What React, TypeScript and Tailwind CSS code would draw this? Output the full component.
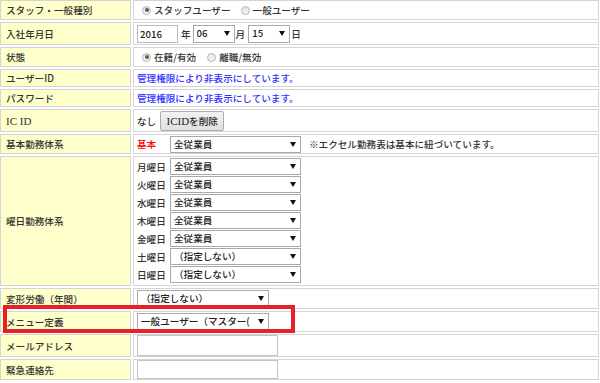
import React from 'react'

const font = { fontFamily: '"Noto Sans CJK JP", "Noto Sans", sans-serif' }

function Radio({ checked }: { checked?: boolean }) {
  return (
    <span className="ml-[5px] mr-[3px] inline-flex h-[9px] w-[9px] shrink-0 items-center justify-center rounded-full border border-[#b5b5b5] bg-gradient-to-b from-[#e4e4e4] to-[#f6f6f6]">
      {checked && <span className="h-[4px] w-[4px] rounded-full bg-[#5a5a5a]" />}
    </span>
  )
}

function Arrow() {
  return (
    <svg width="6" height="5" viewBox="0 0 6 5" className="shrink-0">
      <path d="M0 0h6L3 5z" fill="#111" />
    </svg>
  )
}

function Select({ value, w, className = '' }: { value: string; w: string; className?: string }) {
  return (
    <div
      className={`flex h-[17px] shrink-0 items-center gap-[2px] border border-[#a9a9a9] bg-white pl-[3px] pr-[4px] text-[#222] ${w} ${className}`}
    >
      <span className="min-w-0 flex-1 overflow-hidden whitespace-nowrap leading-[15px]">{value}</span>
      <Arrow />
    </div>
  )
}

function Label({ children }: { children: React.ReactNode }) {
  return (
    <div className="flex items-center border border-[#d4d4d4] bg-[#ffffcc] pl-[5px] text-[#333]">
      {children}
    </div>
  )
}

function Value({ children, className = '' }: { children?: React.ReactNode; className?: string }) {
  return (
    <div className={`flex items-center border border-[#d4d4d4] bg-white pl-[3px] text-[#333] ${className}`}>
      {children}
    </div>
  )
}

const days = [
  { d: '月曜日', v: '全従業員' },
  { d: '火曜日', v: '全従業員' },
  { d: '水曜日', v: '全従業員' },
  { d: '木曜日', v: '全従業員' },
  { d: '金曜日', v: '全従業員' },
  { d: '土曜日', v: '（指定しない）' },
  { d: '日曜日', v: '（指定しない）' },
]

export default function App() {
  return (
    <div className="relative h-[383px] w-[600px] overflow-hidden bg-white text-[9.6px] font-medium leading-[12px]" style={font}>
      <div className="grid grid-cols-[131px_466px] grid-rows-[20px_23px_20px_18px_18px_23px_20px_130px_21px_21px_23px_21px] gap-[2px]">
        <Label>スタッフ・一般種別</Label>
        <Value>
          <Radio checked />
          <span>スタッフユーザー</span>
          <span className="w-[5px]" />
          <Radio />
          <span>一般ユーザー</span>
        </Value>

        <Label>入社年月日</Label>
        <Value>
          <div className="flex h-[18px] w-[41px] items-center border border-[#bdbdbd] pl-[2px] text-[#222]">2016</div>
          <span className="ml-[3px] mr-[2px]">年</span>
          <Select value="06" w="w-[42px]" className="h-[18px]" />
          <span className="ml-[1px] mr-[3px]">月</span>
          <Select value="15" w="w-[42px]" className="h-[18px]" />
          <span className="ml-[1px]">日</span>
        </Value>

        <Label>状態</Label>
        <Value>
          <Radio checked />
          <span>在籍/有効</span>
          <span className="w-[6px]" />
          <Radio />
          <span>離職/無効</span>
        </Value>

        <Label>ユーザーID</Label>
        <Value>
          <span className="text-[#2f2fff]">管理権限により非表示にしています。</span>
        </Value>

        <Label>パスワード</Label>
        <Value>
          <span className="text-[#2f2fff]">管理権限により非表示にしています。</span>
        </Value>

        <Label>
          <span className="text-[11px]" style={{ fontFamily: '"Liberation Serif", serif' }}>IC ID</span>
        </Label>
        <Value>
          <span>なし</span>
          <button className="ml-[4px] flex h-[20px] w-[64px] items-center justify-center rounded-[2px] border border-[#adadad] bg-gradient-to-b from-[#f2f2f2] to-[#e0e0e0] text-[#222]">
            <span className="text-[11px]" style={{ fontFamily: '"Liberation Serif", serif' }}>ICID</span>
            <span>を削除</span>
          </button>
        </Value>

        <Label>基本勤務体系</Label>
        <Value>
          <span className="w-[33px] shrink-0 text-[#f00]">基本</span>
          <Select value="全従業員" w="w-[131px]" />
          <span className="ml-[8px]">※エクセル勤務表は基本に紐づいています。</span>
        </Value>

        <Label>曜日勤務体系</Label>
        <Value className="flex-col items-start justify-start pt-[1px]">
          {days.map((r) => (
            <div key={r.d} className="flex h-[18px] shrink-0 items-start">
              <span className="flex h-[17px] w-[33px] items-center">{r.d}</span>
              <Select value={r.v} w="w-[131px]" />
            </div>
          ))}
        </Value>

        <Label>変形労働（年間）</Label>
        <Value>
          <Select value="（指定しない）" w="w-[132px]" />
        </Value>

        <Label>メニュー定義</Label>
        <Value>
          <Select value="一般ユーザー（マスター(" w="w-[132px]" className="pl-[2px] pr-[3px]" />
        </Value>

        <Label>メールアドレス</Label>
        <Value>
          <div className="h-[21px] w-[141px] border border-[#c4c4c4] bg-white" />
        </Value>

        <Label>緊急連絡先</Label>
        <Value>
          <div className="h-[19px] w-[141px] border border-[#c4c4c4] bg-white" />
        </Value>
      </div>

      <div className="absolute left-[3px] top-[305px] h-[28px] w-[292px] border-[4px] border-[#e8202a]" />
    </div>
  )
}
